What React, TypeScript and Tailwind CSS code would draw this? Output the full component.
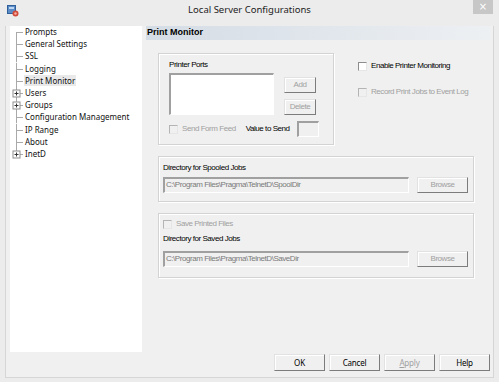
import React from "react";

const treeItems = [
  { label: "Prompts", plus: false },
  { label: "General Settings", plus: false },
  { label: "SSL", plus: false },
  { label: "Logging", plus: false },
  { label: "Print Monitor", plus: false, selected: true },
  { label: "Users", plus: true },
  { label: "Groups", plus: true },
  { label: "Configuration Management", plus: false },
  { label: "IP Range", plus: false },
  { label: "About", plus: false },
  { label: "InetD", plus: true },
];

const TreeConnector = ({ first, last, plus }: { first: boolean; last: boolean; plus: boolean }) => (
  <svg width="14" height="12.2" viewBox="0 0 14 12.2" className="shrink-0">
    <line x1="6.5" y1={first ? 6 : 0} x2="6.5" y2={last ? 6 : 12.2} stroke="#a9a9a9" strokeWidth="1" />
    <line x1="6.5" y1="6.5" x2="13" y2="6.5" stroke="#a9a9a9" strokeWidth="1" />
    {plus && (
      <>
        <rect x="3" y="3" width="7" height="7" fill="#fff" stroke="#8e8e8e" strokeWidth="1" />
        <line x1="4.5" y1="6.5" x2="8.5" y2="6.5" stroke="#333" strokeWidth="1" />
        <line x1="6.5" y1="4.5" x2="6.5" y2="8.5" stroke="#333" strokeWidth="1" />
      </>
    )}
  </svg>
);

const Btn = ({ label, disabled, className = "" }: { label: React.ReactNode; disabled?: boolean; className?: string }) => (
  <div
    className={`flex items-center justify-center bg-[#f0f0f0] border border-t-[#e2e2e2] border-l-[#e2e2e2] border-r-[#7c7c7c] border-b-[#7c7c7c] shadow-[inset_1px_1px_0_#fff] ${
      disabled ? "text-[#a0a0a0]" : "text-black"
    } ${className}`}
  >
    {label}
  </div>
);

const Check = ({ disabled }: { disabled?: boolean }) => (
  <div
    className={`w-[9px] h-[9px] shrink-0 border border-t-[#8e8e8e] border-l-[#8e8e8e] border-r-[#e6e6e6] border-b-[#e6e6e6] ${
      disabled ? "bg-[#f0f0f0] border-t-[#b4b4b4] border-l-[#b4b4b4]" : "bg-white"
    }`}
  />
);

const Sunken = ({ className = "", children }: { className?: string; children?: React.ReactNode }) => (
  <div
    className={`border-t-2 border-l-2 border-r border-b border-t-[#a0a0a0] border-l-[#a0a0a0] border-r-white border-b-white ${className}`}
  >
    {children}
  </div>
);

const groupBox = "border border-[#d3d3d3] shadow-[inset_1px_1px_0_#fff,1px_1px_0_#fff]";

export default function App() {
  return (
    <div className="w-[499px] h-[382px] bg-[#ececec] flex flex-col overflow-hidden font-['Liberation_Sans',Arial,sans-serif] text-black">
      {/* title bar */}
      <div className="h-[26px] flex items-start shrink-0">
        <div className="w-[26px] pl-[7px] pt-[5px]">
          <svg width="12" height="12" viewBox="0 0 12 12">
            <rect x="0.5" y="0.5" width="8" height="8" fill="#5b8cc7" stroke="#2f5f98" />
            <rect x="2" y="2" width="5" height="2" fill="#bcd5f0" />
            <circle cx="8.5" cy="8.5" r="3" fill="#d24a3a" />
            <circle cx="8.5" cy="8.5" r="1.2" fill="#f3b0a4" />
          </svg>
        </div>
        <div className="flex-1 text-center pt-[3px] text-[9.5px] text-[#222] font-['Noto_Sans',sans-serif]">
          Local Server Configurations
        </div>
        <div className="w-[20px] h-[14px] mr-[6px] bg-[#c7c7c7] flex items-center justify-center text-white text-[10px] leading-none font-['DejaVu_Sans',sans-serif]">
          ×
        </div>
      </div>

      {/* dialog body */}
      <div className="flex-1 mx-[5px] mb-[4px] border-x border-b border-[#d6d6d6] bg-[#f0f0f0] flex flex-col">
        <div className="flex">
          {/* tree */}
          <div className="ml-[4px] w-[132px] h-[326px] bg-white font-['Noto_Sans',sans-serif] text-[8px] text-[#111]">
            {treeItems.map((item, i) => (
              <div key={item.label} className="flex items-center h-[12.2px]">
                <TreeConnector first={i === 0} last={i === treeItems.length - 1} plus={item.plus} />
                <span className={`leading-none px-[1px] py-[1.5px] ${item.selected ? "bg-[#e9e9e9]" : ""}`}>{item.label}</span>
              </div>
            ))}
          </div>

          {/* right panel */}
          <div className="ml-[4px] mr-[3px] flex-1 flex flex-col">
            <div className="h-[14px] flex items-center pl-[1px] bg-gradient-to-r from-[#d4dce5] to-[#edf0f3] font-bold text-[9px]">
              Print Monitor
            </div>

            <div className="pl-[12px] text-[8px] tracking-[-0.45px]">
              <div className="flex mt-[13px]">
                {/* printer ports group */}
                <div className={`w-[176px] h-[92px] pl-[10px] pt-[6px] ${groupBox}`}>
                  <div className="leading-[10px]">Printer Ports</div>
                  <div className="flex mt-[3px]">
                    <Sunken className="w-[105px] h-[42px] bg-white" />
                    <div className="ml-[10px] flex flex-col">
                      <Btn label="Add" disabled className="mt-[4px] w-[32px] h-[16px]" />
                      <Btn label="Delete" disabled className="mt-[6px] w-[32px] h-[16px]" />
                    </div>
                  </div>
                  <div className="flex items-center mt-[6px] h-[16px]">
                    <Check disabled />
                    <span className="ml-[4px] text-[#a0a0a0]">Send Form Feed</span>
                    <span className="ml-[10px]">Value to Send</span>
                    <Sunken className="ml-[7px] w-[22px] h-[16px] bg-[#f0f0f0]" />
                  </div>
                </div>

                {/* monitoring options */}
                <div className="ml-[24px] pt-[8px] flex flex-col">
                  <div className="flex items-center h-[10px]">
                    <Check />
                    <span className="ml-[4px]">Enable Printer Monitoring</span>
                  </div>
                  <div className="flex items-center h-[10px] mt-[16px]">
                    <Check disabled />
                    <span className="ml-[4px] text-[#a0a0a0]">Record Print Jobs to Event Log</span>
                  </div>
                </div>
              </div>

              {/* spooled jobs */}
              <div className={`mt-[11px] w-[316px] h-[46px] pl-[4px] pt-[6px] ${groupBox}`}>
                <div className="leading-[10px]">Directory for Spooled Jobs</div>
                <div className="flex mt-[4px]">
                  <Sunken className="w-[246px] h-[16px] bg-[#f0f0f0] text-[#7a7a7a] leading-[12px] pl-[1px]">
                    C:\Program Files\Pragma\TelnetD\SpoolDir
                  </Sunken>
                  <Btn label="Browse" disabled className="ml-[8px] w-[51px] h-[16px]" />
                </div>
              </div>

              {/* saved jobs */}
              <div className={`mt-[11px] w-[316px] h-[65px] pl-[4px] pt-[5px] ${groupBox}`}>
                <div className="flex items-center h-[10px]">
                  <Check disabled />
                  <span className="ml-[4px] text-[#a0a0a0]">Save Printed Files</span>
                </div>
                <div className="leading-[10px] mt-[5px]">Directory for Saved Jobs</div>
                <div className="flex mt-[7px]">
                  <Sunken className="w-[246px] h-[16px] bg-[#f0f0f0] text-[#7a7a7a] leading-[12px] pl-[1px]">
                    C:\Program Files\Pragma\TelnetD\SaveDir
                  </Sunken>
                  <Btn label="Browse" disabled className="ml-[8px] w-[51px] h-[16px]" />
                </div>
              </div>
            </div>
          </div>
        </div>

        {/* bottom buttons */}
        <div className="flex justify-end gap-[4px] pr-[3px] mt-[2px] text-[8px] font-['Noto_Sans',sans-serif] tracking-[-0.2px]">
          <Btn label="OK" className="w-[51px] h-[17px]" />
          <Btn label="Cancel" className="w-[51px] h-[17px]" />
          <Btn label={<><span className="underline">A</span>pply</>} disabled className="w-[51px] h-[17px]" />
          <Btn label="Help" className="w-[51px] h-[17px]" />
        </div>
      </div>
    </div>
  );
}
